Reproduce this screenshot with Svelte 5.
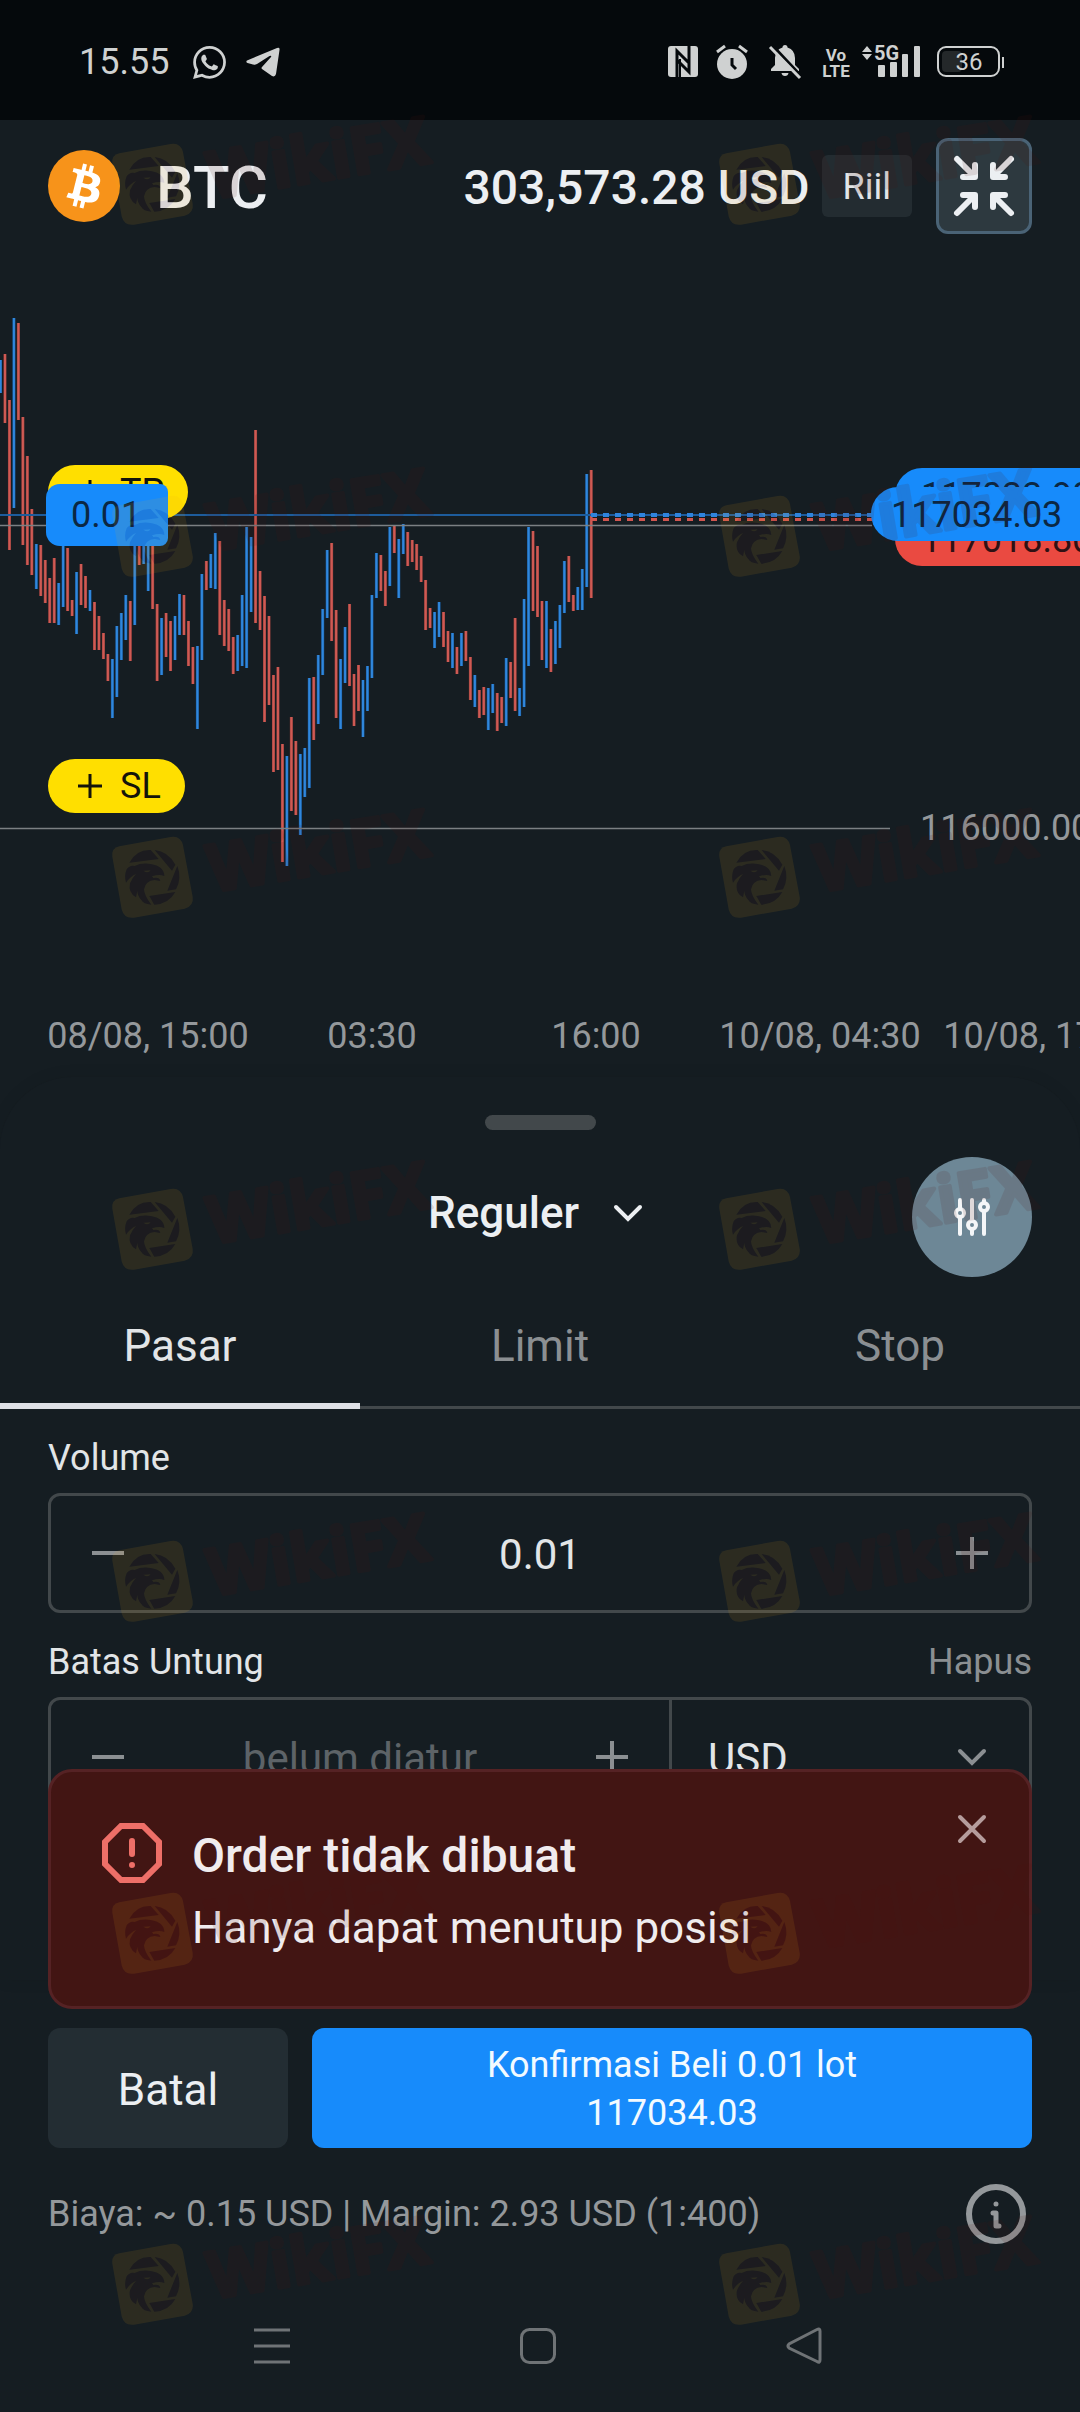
<script>
	// high / low of every 30 min candle, in plot pixels. u = up, d = down
	const raw = `u108,141 d102,171 d148,298 u66,256 d71,168 d165,293 d204,313 d257,323 u292,337 d293,344
		d308,351 d326,371 d306,371 u331,373 u285,355 d296,359 d348,364 u320,382 d312,353 d324,356
		u338,359 d350,398 d364,398 d381,407 d402,429 u407,466 u374,445 u361,408 u343,388 d349,409
		u288,373 d290,313 u285,312 u290,339 d292,357 d352,429 u366,423 d361,405 d369,419 u364,408
		u342,383 d343,383 d369,414 d395,432 u394,477 u322,408 d309,338 u302,336 u281,337 d289,383
		d348,394 d357,399 d385,422 u383,419 u343,414 u275,416 u285,360 d178,371 d319,378 d344,470
		d364,453 d423,520 d415,518 d492,610 u504,614 d465,559 d489,563 u502,583 u496,545 u426,536
		d425,488 u403,472 u357,423 u298,366 d291,389 d358,466 u407,477 u375,431 d352,434 d422,474
		d413,459 u428,485 u414,459 u343,426 u301,346 d303,339 d319,354 u275,334 d274,301 u287,346
		u272,302 d280,314 d288,310 d292,318 d304,330 d328,378 d356,376 u360,396 u350,385 d360,395
		d379,410 u381,416 d395,422 u381,414 d379,409 d405,448 u423,455 d438,466 d435,463 u436,478
		u432,461 d441,479 d445,471 u406,474 d410,446 d366,459 u436,464 u347,455 u275,414 d279,359
		d294,365 d349,408 u349,416 d377,420 u369,412 u353,396 u309,361 d304,350 d343,359 u335,358
		u317,358 u222,335 d218,346`;

	const STEP = 4.475;
	const candles = raw.split(/\s+/).map((c, i) => {
		const [high, low] = c.slice(1).split(',').map(Number);
		return { x: i * STEP + 0.5, up: c[0] === 'u', high, height: low - high };
	});

	const times = ['08/08, 15:00', '03:30', '16:00', '10/08, 04:30', '10/08, 17:00'];
	const tabs = ['Pasar', 'Limit', 'Stop'];

	const marks = [95, 447, 788, 1140, 1492, 1844, 2195].flatMap((top) => [
		{ top, left: 100 },
		{ top, left: 707 }
	]);

	let activeTab = $state('Pasar');
	let volume = $state('0.01');
	let takeProfit = $state('');
	let showToast = $state(true);

	function changeVolume(delta) {
		volume = Math.max(0.01, Number(volume) + delta).toFixed(2);
	}

	function changeProfit(delta) {
		takeProfit = String(Math.max(0, Number(takeProfit) + delta));
	}
</script>

{#snippet minus()}
	<svg class="icon" viewBox="0 0 48 48" aria-hidden="true"><path d="M8 24H40" /></svg>
{/snippet}

{#snippet plus()}
	<svg class="icon" viewBox="0 0 48 48" aria-hidden="true"><path d="M8 24H40M24 8V40" /></svg>
{/snippet}

{#snippet chevron()}
	<svg class="icon" viewBox="0 0 48 48" aria-hidden="true"><path d="M12 18L24 30L36 18" stroke-linecap="round" /></svg>
{/snippet}

{#snippet eagle()}
	<path d="M88 224Q110 184 152 186L176 213Z" />
	<path d="M164 186Q204 190 226 230L216 248Z" />
	<path d="M232 234Q246 270 228 304L202 308Z" />
	<path d="M148 324L226 312Q206 348 163 350Z" />
	<path
		fill-rule="evenodd"
		d="M80 244Q90 230 104 234Q124 224 152 228Q192 234 193 264Q178 257 156 265L160 270Q178 266 181 279L164 276Q136 278 132 304Q132 322 154 350Q130 348 124 336Q112 322 112 308L108 328Q84 314 90 286Q98 268 108 258Q92 264 78 284Q72 264 80 244ZM130 248Q144 258 152 247Z"
	/>
{/snippet}

<div class="screen">
	<div class="statusbar">
		<div class="status-left">
			<span>15.55</span>
			<svg width="33" height="33" viewBox="0 0 24 24" fill="currentColor" aria-hidden="true">
				<path d="M17.472 14.382c-.297-.149-1.758-.867-2.03-.967-.273-.099-.471-.148-.67.15-.197.297-.767.966-.94 1.164-.173.199-.347.223-.644.075-.297-.15-1.255-.463-2.39-1.475-.883-.788-1.48-1.761-1.653-2.059-.173-.297-.018-.458.13-.606.134-.133.298-.347.446-.52.149-.174.198-.298.298-.497.099-.198.05-.371-.025-.52-.075-.149-.669-1.612-.916-2.207-.242-.579-.487-.5-.669-.51-.173-.008-.371-.01-.57-.01-.198 0-.52.074-.792.372-.272.297-1.04 1.016-1.04 2.479 0 1.462 1.065 2.875 1.213 3.074.149.198 2.096 3.2 5.077 4.487.709.306 1.262.489 1.694.625.712.227 1.36.195 1.871.118.571-.085 1.758-.719 2.006-1.413.248-.694.248-1.289.173-1.413-.074-.124-.272-.198-.57-.347m-5.421 7.403h-.004a9.87 9.87 0 01-5.031-1.378l-.361-.214-3.741.982.998-3.648-.235-.374a9.86 9.86 0 01-1.51-5.26c.001-5.45 4.436-9.884 9.888-9.884 2.64 0 5.122 1.03 6.988 2.898a9.825 9.825 0 012.893 6.994c-.003 5.45-4.437 9.884-9.885 9.884m8.413-18.297A11.815 11.815 0 0012.05 0C5.495 0 .16 5.335.157 11.892c0 2.096.547 4.142 1.588 5.945L.057 24l6.305-1.654a11.882 11.882 0 005.683 1.448h.005c6.554 0 11.89-5.335 11.893-11.893a11.821 11.821 0 00-3.48-8.413Z" />
			</svg>
			<svg width="34" height="32" viewBox="0 0 34 32" fill="currentColor" aria-hidden="true">
				<path d="M1 14.5L31 2Q34 1 33.500 4L30 28Q29 31.500 26 30L16 23Q15 22 16 21L25 11Q26 9 23.500 10L11 18Q9 19 7 18.500L1.500 17Q-.5 16 1 14.500Z" />
			</svg>
		</div>
		<div class="status-right">
			<svg width="30" height="32" viewBox="0 0 30 32" aria-hidden="true">
				<rect width="30" height="31" y="0" rx="3" fill="currentColor" />
				<path d="M9 31V5L21 17M21 0V26L9 14" fill="none" stroke="#05090c" stroke-width="3" />
				<path d="M12 13V31" stroke="#05090c" stroke-width="2" />
			</svg>
			<svg width="32" height="34" viewBox="0 0 32 34" aria-hidden="true">
				<circle cx="16" cy="19" r="15" fill="currentColor" />
				<path d="M1 7L9 1M31 7L23 1" stroke="currentColor" stroke-width="3" />
				<path d="M16 13V20L20 24" fill="none" stroke="#05090c" stroke-width="3" />
			</svg>
			<svg class="muted-bell" width="32" height="34" viewBox="0 0 32 34" aria-hidden="true">
				<path d="M16 0a2.500 2.500 0 0 1 2.500 2.500Q26 5 26 13V20L30 24V26H2V24L6 20V13Q6 5 13.500 2.500A2.500 2.500 0 0 1 16 0ZM12.500 28H19.500Q19 31 16 31T12.500 28Z" fill="currentColor" />
				<path d="M3 0L33 32" stroke="#05090c" stroke-width="3" />
				<path d="M1 2L31 33" stroke="currentColor" stroke-width="3" />
			</svg>
			<svg class="volte" width="26" height="34" viewBox="0 0 26 34" aria-label="VoLTE">
				<text x="13" y="16" text-anchor="middle">Vo</text>
				<text x="13" y="32" text-anchor="middle">LTE</text>
			</svg>
			<svg class="signal" width="62" height="34" viewBox="0 0 62 34" fill="currentColor" aria-label="5G">
				<path d="M6 1L11 7H1ZM6 15L11 9H1Z" />
				<text x="13" y="15">5G</text>
				<rect x="17" y="20" width="7" height="12" rx="1" />
				<rect x="29" y="17" width="7" height="15" rx="1" />
				<rect x="41" y="9" width="6" height="23" rx="1" />
				<rect x="53" y="1" width="6" height="31" rx="1" />
			</svg>
			<svg class="battery" width="68" height="34" viewBox="0 0 68 34" aria-label="Baterai 36">
				<rect x="1" y="2" width="61" height="29" rx="8" fill="none" stroke="currentColor" stroke-width="2" />
				<rect x="5" y="6" width="20" height="21" rx="4" fill="#24282a" />
				<path d="M66 12V23" stroke="currentColor" stroke-width="2" />
				<text x="32" y="25" text-anchor="middle">36</text>
			</svg>
		</div>
	</div>

	<header class="header">
		<svg class="coin" viewBox="0 0 32 32" aria-hidden="true">
			<circle cx="16" cy="16" r="16" fill="#f7931a" />
			<path fill="#fff" d="M23.189 14.02c.314-2.096-1.283-3.223-3.465-3.975l.708-2.84-1.728-.43-.69 2.765c-.454-.114-.92-.22-1.385-.326l.695-2.783L15.596 6l-.708 2.839c-.376-.086-.746-.17-1.104-.26l.002-.009-2.384-.595-.46 1.846s1.283.294 1.256.312c.7.175.826.638.805 1.006l-.806 3.235c.048.012.11.03.18.057l-.183-.045-1.13 4.532c-.086.212-.303.531-.793.41.018.025-1.256-.313-1.256-.313l-.858 1.978 2.25.561c.418.105.828.215 1.231.318l-.715 2.872 1.727.43.708-2.84c.472.127.93.245 1.378.357l-.706 2.828 1.728.43.715-2.866c2.948.558 5.164.333 6.097-2.333.752-2.146-.037-3.385-1.588-4.192 1.13-.26 1.98-1.003 2.207-2.538zm-3.95 5.538c-.533 2.147-4.148.986-5.32.695l.95-3.805c1.172.293 4.929.872 4.37 3.11zm.535-5.569c-.487 1.953-3.495.96-4.47.717l.86-3.45c.975.243 4.118.696 3.61 2.733z" />
		</svg>
		<h1>BTC</h1>
		<span class="balance">303,573.28 USD</span>
		<span class="badge">Riil</span>
		<button class="collapse" aria-label="Perkecil grafik">
			<svg viewBox="0 0 96 96" aria-hidden="true">
				<path d="M21 21L37 37M39 27V39H27M75 21L59 37M57 27V39H69M21 75L37 59M39 69V57H27M75 75L59 59M57 69V57H69" />
			</svg>
		</button>
	</header>

	<section class="chart" aria-label="Grafik BTC">
		<div class="plot">
			<svg class="candles" viewBox="0 0 1080 760" aria-hidden="true">
				{#each candles as c}
					<g class:up={c.up}>
						<rect class="edge" x={c.x - 1.5} y={c.high} width="3" height={c.height} />
						<rect class="core" x={c.x - 1} y={c.high} width="2" height={c.height} />
					</g>
				{/each}
				<path d="M0 263H872" stroke="#1d5c9c" stroke-width="2" />
				<path d="M591 263H872" stroke="#2f84dd" stroke-width="4" stroke-dasharray="6 6" />
				<path d="M591 267.500H872" stroke="#d05650" stroke-width="3" stroke-dasharray="6 6" />
				<path d="M0 273.500H872M0 576.500H890" stroke="#7b8083" stroke-width="1.500" />
			</svg>

			<button class="pill tp">{@render plus()}TP</button>
			<div class="lot">0.01</div>
			<button class="pill sl">{@render plus()}SL</button>

			<span class="tag ask">117033.98</span>
			<span class="tag bid">117018.80</span>
			<span class="tag order">117034.03</span>
			<span class="level">116000.00</span>
		</div>
		<div class="times">
			{#each times as t}
				<span>{t}</span>
			{/each}
		</div>
	</section>

	<section class="sheet">
		<div class="handle"></div>
		<div class="sheet-head">
			<label class="mode">
				<select aria-label="Mode order">
					<option>Reguler</option>
				</select>
				{@render chevron()}
			</label>
			<button class="filters" aria-label="Pengaturan">
				<svg viewBox="0 0 48 48" aria-hidden="true">
					<path d="M12 7V15M12 25V41M24 7V27M24 37V41M36 7V9M36 19V41" />
					<circle cx="12" cy="20" r="4" />
					<circle cx="24" cy="32" r="4" />
					<circle cx="36" cy="14" r="4" />
				</svg>
			</button>
		</div>

		<div class="tabs" role="tablist">
			{#each tabs as tab}
				<button role="tab" aria-selected={activeTab === tab} class:active={activeTab === tab} onclick={() => (activeTab = tab)}>
					{tab}
				</button>
			{/each}
		</div>

		<div class="form">
			<div class="row-label">
				<label for="volume">Volume</label>
			</div>
			<div class="field">
				<div class="stepper">
					<button aria-label="Kurangi volume" onclick={() => changeVolume(-0.01)}>{@render minus()}</button>
					<input id="volume" type="text" inputmode="decimal" bind:value={volume} />
					<button aria-label="Tambah volume" onclick={() => changeVolume(0.01)}>{@render plus()}</button>
				</div>
			</div>

			<div class="row-label">
				<label for="profit">Batas Untung</label>
				<button class="clear" onclick={() => (takeProfit = '')}>Hapus</button>
			</div>
			<div class="field">
				<div class="stepper">
					<button aria-label="Kurangi batas untung" onclick={() => changeProfit(-1)}>{@render minus()}</button>
					<input id="profit" type="text" placeholder="belum diatur" bind:value={takeProfit} />
					<button aria-label="Tambah batas untung" onclick={() => changeProfit(1)}>{@render plus()}</button>
				</div>
				<label class="unit">
					<select aria-label="Satuan">
						<option>USD</option>
					</select>
					{@render chevron()}
				</label>
			</div>

			<div class="row-label"></div>
			<div class="field"></div>
		</div>
	</section>

	<footer class="footer">
		{#if showToast}
			<div class="toast" role="alert">
				<svg class="warn" viewBox="0 0 60 60" aria-hidden="true">
					<path d="M19 3H41L57 19V41L41 57H19L3 41V19Z" />
					<path d="M30 18V31M30 42V42.100" stroke-linecap="round" />
				</svg>
				<div class="toast-text">
					<strong>Order tidak dibuat</strong>
					<p>Hanya dapat menutup posisi</p>
				</div>
				<button class="close" aria-label="Tutup" onclick={() => (showToast = false)}>
					<svg class="icon" viewBox="0 0 48 48" aria-hidden="true"><path d="M12 12L36 36M36 12L12 36" stroke-linecap="round" /></svg>
				</button>
			</div>
		{/if}

		<div class="actions">
			<button class="cancel">Batal</button>
			<button class="confirm">Konfirmasi Beli 0.01 lot<br />117034.03</button>
		</div>
		<div class="fees">
			<span>Biaya: ~ 0.15 USD | Margin: 2.93 USD (1:400)</span>
			<button aria-label="Info">
				<svg viewBox="0 0 72 72" aria-hidden="true">
					<circle cx="36" cy="36" r="27" />
					<path d="M36 26V26.100M33 35H36V48H39" stroke-width="5" stroke-linecap="round" stroke-linejoin="round" />
				</svg>
			</button>
		</div>
	</footer>

	<nav class="navbar">
		<button aria-label="Aplikasi terbaru">
			<svg viewBox="0 0 48 48"><path d="M6 8H42M6 24H42M6 40H42" /></svg>
		</button>
		<button aria-label="Beranda">
			<svg viewBox="0 0 48 48"><rect x="7.500" y="7.500" width="33" height="33" rx="8" /></svg>
		</button>
		<button aria-label="Kembali">
			<svg viewBox="0 0 48 48"><path d="M37 7.500Q40 6 40 9V38Q40 41.500 37 39.500L9 26Q7 24 9 22Z" /></svg>
		</button>
	</nav>

	<div class="watermarks" aria-hidden="true">
		{#each marks as m, i}
			<svg viewBox="0 0 1050 450" style="top: {m.top}px; left: {m.left}px">
				<mask id="cut-{i}">
					<rect width="1050" height="450" fill="#fff" />
					{@render eagle()}
				</mask>
				<path
					class="gold"
					mask="url(#cut-{i})"
					d="M58 175L212 147Q242 142 249 172L278 326Q282 354 254 362L102 389Q72 393 65 364L37 206Q34 180 58 175Z"
				/>
				<g class="dark">
					{@render eagle()}
					<text x="336" y="312" transform="rotate(-9.500 336 312)">WikiFX</text>
				</g>
			</svg>
		{/each}
	</div>
</div>

<style>
	:global(body) {
		background: #151d22;
	}

	.screen {
		--bg: #151d22;
		--line: #42484b;
		--text: #e2e5e7;
		--muted: #8b8f92;
		--blue: #178bfb;
		position: relative;
		display: flex;
		flex-direction: column;
		height: 100vh;
		overflow: hidden;
		background: var(--bg);
		color: var(--text);
		font-family: Roboto, sans-serif;
		font-size: 36px;
		line-height: 48px;
	}

	button,
	input,
	select {
		appearance: none;
		margin: 0;
		padding: 0;
		border: none;
		border-radius: 0;
		background: transparent;
		color: inherit;
		font: inherit;
		outline: none;
	}

	button {
		cursor: pointer;
	}

	svg {
		display: block;
		flex: none;
	}

	.icon {
		width: 48px;
		height: 48px;
		fill: none;
		stroke: currentColor;
		stroke-width: 4;
	}

	/* status bar */
	.statusbar {
		display: flex;
		flex: none;
		align-items: center;
		justify-content: space-between;
		height: 116px;
		padding: 4px 75px 0 79px;
		background: #05090c;
		color: #cfd1d1;
	}

	.status-left,
	.status-right {
		display: flex;
		align-items: center;
	}

	.status-left {
		gap: 20px;
	}

	.status-left span {
		padding-right: 4px;
	}

	.status-right {
		gap: 18px;
	}

	.status-right svg {
		overflow: visible;
	}

	.status-right text {
		fill: currentColor;
		font-family: 'Liberation Sans Narrow', Roboto, sans-serif;
		font-size: 17px;
		font-weight: 700;
	}

	.muted-bell {
		margin-left: 3px;
	}

	.volte {
		margin-left: 4px;
	}

	.signal {
		margin-left: -6px;
	}

	.signal text {
		font-size: 20px;
	}

	.battery {
		margin-left: -4px;
	}

	.battery text {
		font-family: Roboto, sans-serif;
		font-size: 24px;
		font-weight: 400;
	}

	/* header */
	.header {
		display: flex;
		flex: none;
		align-items: center;
		padding: 18px 48px;
	}

	.coin {
		width: 72px;
		height: 72px;
	}

	h1 {
		margin: 0 auto 0 36px;
		padding-top: 3px;
		color: #eceff2;
		font-size: 60px;
		font-weight: 500;
		line-height: 72px;
	}

	.balance {
		margin-right: 12px;
		padding-top: 3px;
		color: #eceff2;
		font-size: 48px;
		font-weight: 500;
		white-space: nowrap;
	}

	.badge {
		margin-right: 24px;
		padding: 8px 21px 6px;
		border-radius: 6px;
		background: #232c31;
	}

	.collapse {
		box-sizing: border-box;
		width: 96px;
		height: 96px;
		border: 3px solid #4a6376;
		border-radius: 12px;
		background: #2d393f;
	}

	.collapse svg {
		margin: -3px;
		width: 96px;
		height: 96px;
		fill: none;
		stroke: #eceff2;
		stroke-width: 6;
		stroke-linecap: round;
		stroke-linejoin: round;
	}

	/* chart */
	.chart {
		flex: none;
		overflow: hidden;
		padding-bottom: 17px;
	}

	.plot {
		position: relative;
	}

	.candles {
		width: 100%;
	}

	.edge {
		fill: #94403c;
	}

	.core {
		fill: #cf5a54;
	}

	.up .edge {
		fill: #1a5a9b;
	}

	.up .core {
		fill: #3087dc;
	}

	.pill {
		position: absolute;
		left: 48px;
		display: flex;
		align-items: center;
		gap: 12px;
		height: 54px;
		padding: 0 24px 0 18px;
		border-radius: 27px;
		background: #ffdf00;
		color: #14140a;
	}

	.pill .icon {
		width: 36px;
		height: 36px;
		margin-left: 6px;
	}

	.pill.tp {
		top: 213px;
	}

	.pill.sl {
		top: 507px;
	}

	.lot {
		position: absolute;
		top: 232px;
		left: 46px;
		padding: 7px 27px 7px 25px;
		border-radius: 14px 8px 8px 14px;
		background: var(--blue);
		color: #0b2743;
	}

	.tag {
		position: absolute;
		right: 0;
		box-sizing: border-box;
		width: 185px;
		height: 54px;
		padding-left: 26px;
		border-radius: 27px 0 0 27px;
		background: var(--blue);
		color: #0b2743;
		line-height: 56px;
	}

	.tag.ask {
		top: 216px;
	}

	.tag.bid {
		top: 260px;
		background: #ea4a41;
		color: #2f1114;
	}

	.tag.order {
		top: 235px;
		width: 209px;
		padding-left: 20px;
	}

	.level {
		position: absolute;
		top: 552px;
		left: 920px;
		color: #94989b;
	}

	.times {
		display: grid;
		grid-template-columns: repeat(5, 224px);
		margin-left: 36px;
		color: #94989b;
		text-align: center;
		white-space: nowrap;
	}

	/* order sheet */
	.sheet {
		display: flex;
		flex: 1;
		flex-direction: column;
		min-height: 0;
		border-radius: 72px 72px 0 0;
		background: var(--bg);
		box-shadow: 0 0 16px rgba(0, 0, 0, 0.08);
	}

	.handle {
		flex: none;
		align-self: center;
		width: 111px;
		height: 15px;
		margin: 38px 0 27px;
		border-radius: 8px;
		background: var(--line);
	}

	.sheet-head {
		display: grid;
		grid-template-columns: 1fr auto 1fr;
		align-items: center;
		padding: 0 48px;
	}

	.mode {
		display: flex;
		grid-column: 2;
		align-items: center;
		gap: 24px;
		padding-bottom: 8px;
		color: #eceff2;
		font-size: 44px;
		font-weight: 500;
	}

	.filters {
		display: grid;
		place-items: center;
		justify-self: end;
		width: 120px;
		height: 120px;
		border-radius: 50%;
		background: #6d8796;
	}

	.filters svg {
		width: 48px;
		height: 48px;
		fill: none;
		stroke: #f4f6f8;
		stroke-width: 4;
		stroke-linecap: round;
	}

	.tabs {
		display: grid;
		flex: none;
		grid-template-columns: repeat(3, 1fr);
		box-shadow: inset 0 -3px var(--line);
	}

	.tabs button {
		padding: 45px 0 33px;
		border-bottom: 6px solid transparent;
		color: var(--muted);
		font-size: 44px;
	}

	.tabs .active {
		border-color: #dfe1e6;
		color: var(--text);
	}

	.form {
		flex: 1;
		min-height: 0;
		overflow: hidden;
		padding: 0 48px;
	}

	.row-label {
		display: flex;
		justify-content: space-between;
		height: 48px;
		margin: 25px 0 11px;
	}

	.clear {
		color: var(--muted);
	}

	.field {
		display: flex;
		box-sizing: border-box;
		height: 120px;
		border: 3px solid var(--line);
		border-radius: 12px;
		font-size: 42px;
	}

	.stepper {
		display: flex;
		flex: 1;
		align-items: center;
		min-width: 0;
		padding: 0 33px;
	}

	.stepper button {
		color: var(--muted);
	}

	.stepper input {
		flex: 1;
		min-width: 0;
		padding-top: 4px;
		text-align: center;
	}

	.stepper input::placeholder {
		color: #5d6367;
		opacity: 1;
	}

	.unit {
		display: flex;
		align-items: center;
		justify-content: space-between;
		box-sizing: border-box;
		width: 360px;
		padding: 0 33px 0 36px;
		border-left: 3px solid var(--line);
	}

	.unit select {
		padding-top: 4px;
	}

	.unit .icon {
		color: var(--muted);
	}

	/* footer */
	.footer {
		position: relative;
		flex: none;
		padding: 48px 48px 0;
	}

	.toast {
		position: absolute;
		right: 48px;
		bottom: calc(100% - 29px);
		left: 48px;
		box-sizing: border-box;
		display: flex;
		align-items: flex-start;
		gap: 30px;
		padding: 51px 33px 48px 51px;
		border: 3px solid #552224;
		border-radius: 24px;
		background: #421513;
	}

	.warn {
		width: 60px;
		height: 60px;
		fill: none;
		stroke: #ee6f68;
		stroke-width: 6;
	}

	.toast-text {
		flex: 1;
		color: #f0ecee;
	}

	.toast-text strong {
		display: block;
		font-size: 48px;
		font-weight: 500;
		line-height: 66px;
	}

	.toast-text p {
		margin: 9px 0 0;
		font-size: 44px;
		line-height: 60px;
	}

	.close {
		margin-top: -18px;
		color: #b59c9c;
	}

	.actions {
		display: flex;
		gap: 24px;
		height: 120px;
	}

	.actions button {
		border-radius: 12px;
	}

	.cancel {
		width: 240px;
		padding-top: 3px;
		background: #232d33;
		color: #eceff2;
		font-size: 44px;
	}

	.confirm {
		flex: 1;
		padding-top: 2px;
		background: var(--blue);
		color: #f2faff;
	}

	.fees {
		display: flex;
		align-items: center;
		justify-content: space-between;
		margin-top: 30px;
		color: #94989b;
	}

	.fees svg {
		width: 72px;
		height: 72px;
		fill: none;
		stroke: currentColor;
		stroke-width: 6;
	}

	.navbar {
		display: flex;
		flex: none;
		justify-content: center;
		gap: 218px;
		padding: 72px 4px 42px 0;
	}

	.navbar svg {
		width: 48px;
		height: 48px;
		fill: none;
		stroke: #6f7376;
		stroke-width: 3;
	}

	/* watermark overlay */
	.watermarks {
		position: absolute;
		inset: 0;
		overflow: hidden;
		pointer-events: none;
	}

	.watermarks svg {
		position: absolute;
		width: 350px;
		height: 150px;
	}

	.gold {
		fill: #f0aa18;
		opacity: 0.1;
	}

	.dark {
		fill: #51130e;
		opacity: 0.12;
	}

	.watermarks text {
		stroke: #51130e;
		stroke-width: 12;
		stroke-linejoin: round;
		font-family: 'Open Sans', sans-serif;
		font-size: 196px;
		font-weight: 700;
	}
</style>
